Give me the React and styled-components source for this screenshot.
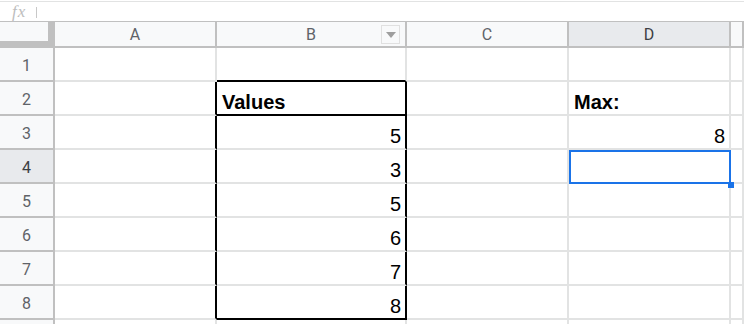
import React from 'react';
import styled, { createGlobalStyle } from 'styled-components';

const GlobalStyle = createGlobalStyle`
    html, body {
        margin : 0;
        padding : 0;
        background : #ffffff;
    }
    body {
        font-family : "Liberation Sans", Arial, sans-serif;
    }
`

const COLUMNS = ['A', 'B', 'C', 'D'];
const ACTIVE_COL = 'D';
const ACTIVE_ROW = 4;

// sheet contents, row by row (A..D)
const ROWS = [
    ['', '', '', ''],
    ['', 'Values', '', 'Max:'],
    ['', '5', '', '8'],
    ['', '3', '', ''],
    ['', '5', '', ''],
    ['', '6', '', ''],
    ['', '7', '', ''],
    ['', '8', '', ''],
];

const BLACK = '#000000';

function cellBorders(row, col) {
    // black box around B2:B8
    const borders = {};
    if (col === 0 && row >= 2 && row <= 8) borders.right = BLACK;
    if (col === 1 && row >= 2 && row <= 8) borders.right = BLACK;
    if (col === 1 && (row === 1 || row === 2 || row === 8)) borders.bottom = BLACK;
    return borders;
}

const isNumber = (v) => v !== '' && !isNaN(Number(v));

export default function App() {
    return (
        <Page>
            <GlobalStyle />
            <FormulaBar>
                <Fx>fx</Fx>
                <FxDivider />
            </FormulaBar>
            <Sheet>
                <Corner />
                {COLUMNS.map((c) => (
                    <ColHeader key={c} $active={c === ACTIVE_COL}>
                        {c}
                        {c === 'B' && (
                            <FilterButton>
                                <svg width="10" height="6" viewBox="0 0 10 6">
                                    <path d="M0 0 L10 0 L5 6 Z" fill="#9e9e9e" />
                                </svg>
                            </FilterButton>
                        )}
                    </ColHeader>
                ))}
                <ColHeader />

                {ROWS.map((cells, i) => {
                    const row = i + 1;
                    return (
                        <React.Fragment key={row}>
                            <RowHeader $active={row === ACTIVE_ROW}>{row}</RowHeader>
                            {cells.map((value, col) => {
                                const b = cellBorders(row, col);
                                const selected = row === ACTIVE_ROW && COLUMNS[col] === ACTIVE_COL;
                                return (
                                    <Cell
                                        key={col}
                                        $right={b.right}
                                        $bottom={b.bottom}
                                        $align={isNumber(value) ? 'flex-end' : 'flex-start'}
                                        $bold={!isNumber(value) && value !== ''}
                                        $selected={selected}
                                    >
                                        {value}
                                    </Cell>
                                );
                            })}
                            <Cell />
                        </React.Fragment>
                    );
                })}

                {/* row 9 only peeks in at the bottom edge */}
                <RowHeader />
                {COLUMNS.map((c) => <Cell key={c} />)}
                <Cell />
            </Sheet>
        </Page>
    );
}

const Page = styled.div`
    width : 744px;
    height : 324px;
    overflow : hidden;
    background : #ffffff;
`

const FormulaBar = styled.div`
    box-sizing : border-box;
    margin-top : 1px;
    height : 21px;
    border-top : 1px solid #e2e3e3;
    border-bottom : 1px solid #c0c0c0;
    display : flex;
    align-items : center;
    padding-left : 12px;
    gap : 10px;
`

const Fx = styled.span`
    font-family : "Liberation Serif", "Times New Roman", serif;
    font-style : italic;
    font-size : 17px;
    line-height : 16px;
    color : #bdbdbd;
    letter-spacing : 1px;
`

const FxDivider = styled.span`
    width : 1px;
    height : 11px;
    background : #c8c8c8;
    margin-top : 1px;
`

const Sheet = styled.div`
    display : grid;
    grid-template-columns : 55px 162px 190px 162px 162px 1fr;
    grid-template-rows : 26px repeat(9, 34px);
`

const Corner = styled.div`
    box-sizing : border-box;
    background : #f8f9fa;
    border-right : 7px solid #c0c0c0;
    border-bottom : 7px solid #c0c0c0;
`

const HeaderBase = styled.div`
    box-sizing : border-box;
    position : relative;
    display : flex;
    align-items : center;
    justify-content : center;
    background : ${(p) => (p.$active ? '#e8eaed' : '#f8f9fa')};
    border-right : 2px solid #c0c0c0;
    border-bottom : 2px solid #c0c0c0;
    font-family : Roboto, "Liberation Sans", sans-serif;
    font-size : 16px;
    color : ${(p) => (p.$active ? '#3c4043' : '#5f6368')};
`

const ColHeader = styled(HeaderBase)`
    padding-top : 1px;
`

const RowHeader = styled(HeaderBase)`
    padding-top : 2px;
`

const FilterButton = styled.div`
    box-sizing : border-box;
    position : absolute;
    right : 5px;
    top : 3px;
    width : 19px;
    height : 19px;
    border : 1px solid #e0e0e0;
    display : flex;
    align-items : center;
    justify-content : center;
`

const Cell = styled.div`
    box-sizing : border-box;
    position : relative;
    display : flex;
    align-items : flex-end;
    justify-content : ${(p) => p.$align || 'flex-start'};
    padding : 0 4px 2px 5px;
    border-right : 2px solid ${(p) => (p.$selected ? '#1a73e8' : p.$right || '#e2e3e3')};
    border-bottom : 2px solid ${(p) => (p.$selected ? '#1a73e8' : p.$bottom || '#e2e3e3')};
    box-shadow : ${(p) => (p.$selected ? 'inset 2px 2px 0 #1a73e8' : 'none')};
    font-family : "Liberation Sans", Arial, sans-serif;
    font-size : 20px;
    line-height : 20px;
    font-weight : ${(p) => (p.$bold ? 700 : 400)};
    color : #000000;
    z-index : ${(p) => (p.$selected ? 2 : 'auto')};

    &::after {
        content : '';
        display : ${(p) => (p.$selected ? 'block' : 'none')};
        position : absolute;
        right : -5px;
        bottom : -6px;
        width : 6px;
        height : 6px;
        background : #1a73e8;
    }
`
